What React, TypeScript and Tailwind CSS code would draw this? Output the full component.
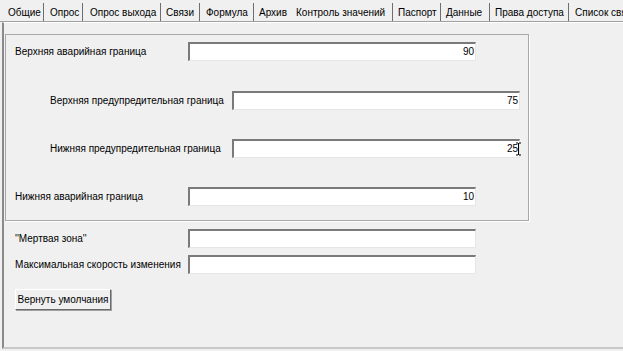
const tabs = [
  { label: "Общие", w: "w-[44px]", pl: "pl-[8px]", sep: true },
  { label: "Опрос", w: "w-[39px]", pl: "pl-[6px]", sep: true },
  { label: "Опрос выхода", w: "w-[78px]", pl: "pl-[7px]", sep: true },
  { label: "Связи", w: "w-[39px]", pl: "pl-[5px]", sep: true },
  { label: "Формула", w: "w-[54px]", pl: "pl-[6px]", sep: true },
  { label: "Архив", w: "w-[37px]", pl: "pl-[5px]", sep: false },
  { label: "Контроль значений", w: "w-[102px]", pl: "pl-[5px]", sep: true },
  { label: "Паспорт", w: "w-[48px]", pl: "pl-[5px]", sep: true },
  { label: "Данные", w: "w-[49px]", pl: "pl-[5px]", sep: true },
  { label: "Права доступа", w: "w-[79px]", pl: "pl-[5px]", sep: true },
  { label: "Список связей", w: "w-[60px]", pl: "pl-[6px]", sep: false },
];

function Field({ value, cursor }: { value?: string; cursor?: boolean }) {
  return (
    <div className="relative flex h-[19px] w-[288px] items-center justify-end border-t-2 border-l-2 border-r border-b border-t-[#7a7a7a] border-l-[#7a7a7a] border-r-[#e6e6e6] border-b-[#e6e6e6] bg-white pr-[1px] text-[10px] leading-none">
      {value}
      {cursor && (
        <svg className="absolute right-[-3px] top-[1px]" width="7" height="14" viewBox="0 0 7 14">
          <path d="M1 1h2M4 1h2M3.5 1v12M1 13h2M4 13h2" stroke="#000" strokeWidth="1" fill="none" />
        </svg>
      )}
    </div>
  );
}

function Row({ label, labelW, pl, mt, value, cursor }: { label: string; labelW: string; pl: string; mt: string; value?: string; cursor?: boolean }) {
  return (
    <div className={`flex items-center ${pl} ${mt}`}>
      <div className={`${labelW} shrink-0 whitespace-nowrap`}>{label}</div>
      <Field value={value} cursor={cursor} />
    </div>
  );
}

export default function App() {
  return (
    <div className="h-[351px] w-[623px] overflow-hidden bg-[#f0f0f0] font-['Liberation_Sans',Arial,sans-serif] text-[10px] text-black">
      <div className="flex h-[22px] border-b border-[#a0a0a0]">
        {tabs.map((t) => (
          <div key={t.label} className={`${t.w} shrink-0 pt-[3px] whitespace-nowrap overflow-hidden`}>
            <div className={`flex h-[18px] items-center ${t.pl} ${t.sep ? "border-r border-[#6e6e6e]" : ""}`}>{t.label}</div>
          </div>
        ))}
      </div>
      <div className="ml-[2px] h-[327px] border-l-2 border-b-2 border-l-[#8a8a8a] border-b-[#c8c8c8] border-t border-t-white">
        <div className="ml-[1px] mt-[11px] h-[187px] w-[524px] border border-[#a8a8a8] shadow-[1px_1px_0_#ffffff]">
          <Row label="Верхняя аварийная граница" labelW="w-[173px]" pl="pl-[9px]" mt="mt-[7px]" value="90" />
          <Row label="Верхняя предупредительная граница" labelW="w-[182px]" pl="pl-[44px]" mt="mt-[30px]" value="75" />
          <Row label="Нижняя предупредительная граница" labelW="w-[182px]" pl="pl-[44px]" mt="mt-[29px]" value="25" cursor />
          <Row label="Нижняя аварийная граница" labelW="w-[173px]" pl="pl-[9px]" mt="mt-[29px]" value="10" />
        </div>
        <Row label="''Мертвая зона''" labelW="w-[173px]" pl="pl-[11px]" mt="mt-[8px]" />
        <Row label="Максимальная скорость изменения" labelW="w-[173px]" pl="pl-[11px]" mt="mt-[7px]" />
        <div className="ml-[11px] mt-[15px] flex h-[21px] w-[96px] items-center justify-center border border-t-white border-l-white border-r-[#6a6a6a] border-b-[#6a6a6a] shadow-[1px_1px_0_#a0a0a0] bg-[#f0f0f0]">
          Вернуть умолчания
        </div>
      </div>
    </div>
  );
}
